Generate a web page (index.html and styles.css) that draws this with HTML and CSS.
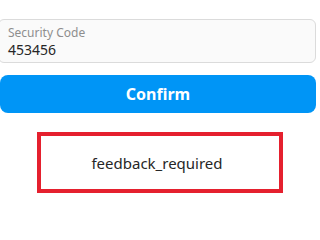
FILE: index.html
```html
<!DOCTYPE html>
<html>
<head>
<meta charset="utf-8">
<link rel="stylesheet" href="styles.css">
</head>
<body>
<div class="page">
  <div class="field">
    <div class="field-label">Security Code</div>
    <div class="field-value">453456</div>
  </div>
  <button class="confirm">Confirm</button>
  <div class="feedback">feedback_required</div>
</div>
</body>
</html>
```
FILE: styles.css
```css
html, body {
  margin: 0;
  padding: 0;
  background: #ffffff;
  overflow: hidden;
}
.page {
  width: 320px;
  height: 214px;
  box-sizing: border-box;
  padding: 19px 4px 0 0;
  display: flex;
  flex-direction: column;
  font-family: "Noto Sans", "Open Sans", sans-serif;
}
.field {
  height: 44px;
  box-sizing: border-box;
  margin-left: -2px;
  background: #fafafa;
  border: 1px solid #dbdbdb;
  border-radius: 6px;
  padding: 5px 0 0 9px;
}
.field-label {
  font-size: 12px;
  line-height: 15px;
  color: #8e8e8e;
}
.field-value {
  margin-top: 1px;
  font-size: 14px;
  line-height: 17px;
  color: #262626;
}
.confirm {
  margin-top: 12px;
  height: 38px;
  border: none;
  border-radius: 8px;
  background: #0095f6;
  color: #ffffff;
  font-family: "Noto Sans", "Open Sans", sans-serif;
  font-weight: 700;
  font-size: 16px;
  padding: 0;
}
.feedback {
  margin: 19px 0 0 37px;
  width: 246px;
  height: 61px;
  box-sizing: border-box;
  border: 4.5px solid #e5202e;
  display: flex;
  align-items: center;
  justify-content: center;
  padding-right: 6px;
  font-size: 15px;
  color: #262626;
}
```
